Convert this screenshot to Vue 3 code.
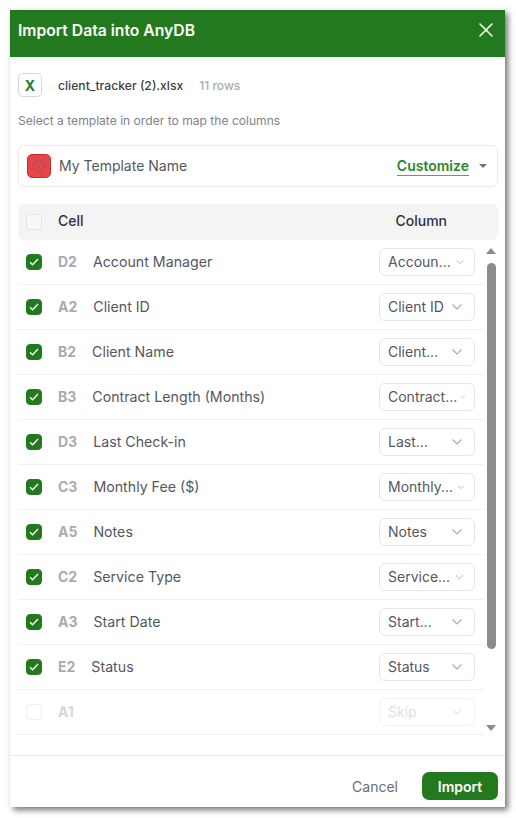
<script setup>
const rows = [
  { cell: 'D2', name: 'Account Manager', column: 'Accoun...' },
  { cell: 'A2', name: 'Client ID', column: 'Client ID' },
  { cell: 'B2', name: 'Client Name', column: 'Client...' },
  { cell: 'B3', name: 'Contract Length (Months)', column: 'Contract...' },
  { cell: 'D3', name: 'Last Check-in', column: 'Last...' },
  { cell: 'C3', name: 'Monthly Fee ($)', column: 'Monthly...' },
  { cell: 'A5', name: 'Notes', column: 'Notes' },
  { cell: 'C2', name: 'Service Type', column: 'Service...' },
  { cell: 'A3', name: 'Start Date', column: 'Start...' },
  { cell: 'E2', name: 'Status', column: 'Status' },
  { cell: 'A1', name: '', column: 'Skip', skipped: true },
]
</script>

<template>
  <div class="page">
    <div class="dialog">
      <header class="header">
        <h1>Import Data into AnyDB</h1>
        <svg class="close" width="16" height="16" viewBox="0 0 16 16" fill="none">
          <path d="M2 2l12 12M14 2L2 14" stroke="#fff" stroke-width="1.6" stroke-linecap="round" />
        </svg>
      </header>

      <div class="body">
        <div class="file">
          <span class="file-icon">X</span>
          <span class="file-name">client_tracker (2).xlsx</span>
          <span class="file-rows">11 rows</span>
        </div>

        <p class="hint">Select a template in order to map the columns</p>

        <div class="template">
          <span class="template-icon">
            <svg width="14" height="14" viewBox="0 0 14 14" fill="none" stroke="#8f5570" stroke-width="1">
              <circle cx="7" cy="7" r="5.5" />
              <path d="M7 6.4v3.2M7 4.2v.9" />
            </svg>
          </span>
          <span class="template-name">My Template Name</span>
          <span class="customize">Customize</span>
          <span class="caret"></span>
        </div>

        <div class="table-head">
          <span class="check"></span>
          <span class="head-cell">Cell</span>
          <span class="head-column">Column</span>
        </div>

        <div class="table-wrap">
          <div class="rows">
            <div v-for="row in rows" :key="row.cell" class="row" :class="{ skipped: row.skipped }">
              <span class="check" :class="{ on: !row.skipped }">
                <svg v-if="!row.skipped" width="10" height="8" viewBox="0 0 10 8" fill="none">
                  <path d="M1 4.2l2.6 2.6L9 1" stroke="#fff" stroke-width="1.3" />
                </svg>
              </span>
              <span class="cell">{{ row.cell }}</span>
              <span class="name">{{ row.name }}</span>
              <div class="select">
                <span class="select-text">{{ row.column }}</span>
                <svg class="chevron" viewBox="0 0 24 16" fill="none">
                  <path d="M7.500 5.500L12 10l4.500-4.500" stroke="#a8aab0" stroke-width="1.100" />
                </svg>
              </div>
            </div>
          </div>

          <div class="scrollbar">
            <span class="arrow up"></span>
            <span class="thumb"></span>
            <span class="arrow down"></span>
          </div>
        </div>
      </div>

      <footer class="footer">
        <button class="cancel">Cancel</button>
        <button class="import">Import</button>
      </footer>
    </div>
  </div>
</template>

<style>
html, body {
  margin: 0;
  background: #fff;
}
</style>

<style scoped>
.page {
  padding: 10px 0 11px 10px;
}

.dialog {
  width: 495px;
  height: 797px;
  display: flex;
  flex-direction: column;
  background: #fff;
  box-shadow: 3px 3px 6px rgba(0, 0, 0, 0.55);
  font-family: Inter, "Liberation Sans", sans-serif;
  color: #4b4d55;
}

.header {
  height: 47px;
  box-sizing: border-box;
  flex: none;
  display: flex;
  align-items: center;
  justify-content: space-between;
  padding: 0 11px 7px 8px;
  background: #237a1e;
}

.header h1 {
  margin: 0;
  font-size: 15.700px;
  font-weight: 600;
  color: #fff;
}

.body {
  flex: 1;
  min-height: 0;
  padding: 16px 7px 0 8px;
}

.file {
  display: flex;
  align-items: center;
  height: 24px;
}

.file-icon {
  width: 22px;
  height: 22px;
  display: flex;
  align-items: center;
  justify-content: center;
  border: 1px solid #d8d8d8;
  border-radius: 5px;
  font-size: 14px;
  font-weight: 700;
  color: #237a3c;
}

.file-name {
  margin-left: 16px;
  font-size: 12.200px;
  font-weight: 500;
  color: #3d3f47;
}

.file-rows {
  margin-left: 16px;
  font-size: 12px;
  font-weight: 500;
  color: #a9abb1;
}

.hint {
  margin: 15px 0 0;
  font-size: 12.100px;
  line-height: 18px;
  color: #80828a;
}

.template {
  height: 40px;
  margin-top: 15px;
  display: flex;
  align-items: center;
  padding: 0 10px 0 8px;
  border: 1px solid #eaeaea;
  border-radius: 6px;
}

.template-icon {
  width: 22px;
  height: 22px;
  display: flex;
  align-items: center;
  justify-content: center;
  border: 1px solid #c22f32;
  border-radius: 5px;
  background: #e84548;
}

.template-name {
  margin: 0 0 2px 8px;
  flex: 1;
  font-size: 14px;
  color: #55575f;
}

.customize {
  font-size: 14px;
  font-weight: 600;
  line-height: 18px;
  color: #2d8526;
  border-bottom: 1px solid #5fa35a;
}

.caret {
  margin-left: 10px;
  width: 0;
  height: 0;
  border-left: 4px solid transparent;
  border-right: 4px solid transparent;
  border-top: 4px solid #6f7178;
}

.table-head {
  height: 36px;
  margin-top: 17px;
  display: flex;
  align-items: center;
  padding: 0 8px;
  border-radius: 6px;
  background: #f4f4f4;
}

.head-cell {
  margin: 0 0 4px 16px;
  flex: 1;
  font-size: 14px;
  font-weight: 500;
  color: #2f3140;
}

.head-column {
  margin: 0 43px 4px 0;
  font-size: 14px;
  font-weight: 500;
  color: #2f3140;
}

.check {
  width: 16px;
  height: 16px;
  box-sizing: border-box;
  flex: none;
  display: flex;
  align-items: center;
  justify-content: center;
  border: 1px solid #e3e3e3;
  border-radius: 3px;
  background: #f8f8f8;
}

.check.on {
  border-color: #237a1e;
  border-radius: 4px;
  background: #237a1e;
}

.table-wrap {
  display: flex;
}

.rows {
  width: 466px;
  flex: none;
}

.row {
  height: 44px;
  display: flex;
  align-items: center;
  padding: 0 9px 0 8px;
  border-bottom: 1px solid #f0f0f0;
}

.row.skipped .check {
  background: #fff;
  border-color: #efefef;
}

.row.skipped .cell {
  color: #d6d7da;
}

.row.skipped .select {
  border-color: #f3f3f3;
}

.row.skipped .select-text {
  color: #e0e1e3;
}

.row.skipped .chevron path {
  stroke: #e6e6e8;
}

.cell {
  margin: 0 0 2px 16px;
  font-size: 14px;
  font-weight: 700;
  color: #a9abb3;
}

.name {
  margin: 0 0 2px 16px;
  flex: 1;
  font-size: 14.200px;
  color: #55575f;
}

.select {
  width: 96px;
  height: 28px;
  box-sizing: border-box;
  display: flex;
  align-items: center;
  padding: 0 5px 0 8px;
  border: 1px solid #e6e6e6;
  border-radius: 6px;
}

.select-text {
  flex: none;
  margin-bottom: 2px;
  font-size: 14px;
  color: #55575f;
}

.chevron {
  flex: 0 1 24px;
  min-width: 0;
  margin-left: auto;
  height: auto;
}

.scrollbar {
  width: 14px;
  flex: none;
  height: 495px;
  display: flex;
  flex-direction: column;
  align-items: center;
  padding-top: 8px;
  box-sizing: border-box;
}

.thumb {
  width: 9px;
  height: 386px;
  margin-top: 9px;
  border-radius: 5px;
  background: #8c8c8c;
}

.arrow {
  width: 0;
  height: 0;
  border-left: 5px solid transparent;
  border-right: 5px solid transparent;
}

.arrow.up {
  border-bottom: 6px solid #8c8c8c;
}

.arrow.down {
  margin-top: 76px;
  border-top: 6px solid #8c8c8c;
}

.footer {
  height: 52px;
  box-sizing: border-box;
  flex: none;
  display: flex;
  align-items: flex-start;
  justify-content: flex-end;
  gap: 24px;
  padding: 16px 7px 0 0;
  border-top: 1px solid #ececec;
}

.footer button {
  border: none;
  font-family: inherit;
  font-size: 14px;
  cursor: pointer;
}

.cancel {
  height: 28px;
  padding: 0;
  background: none;
  color: #6a6d78;
}

.import {
  width: 76px;
  height: 28px;
  padding: 0;
  border-radius: 7px;
  background: #237a1e;
  color: #fff;
  font-weight: 600;
}
</style>
